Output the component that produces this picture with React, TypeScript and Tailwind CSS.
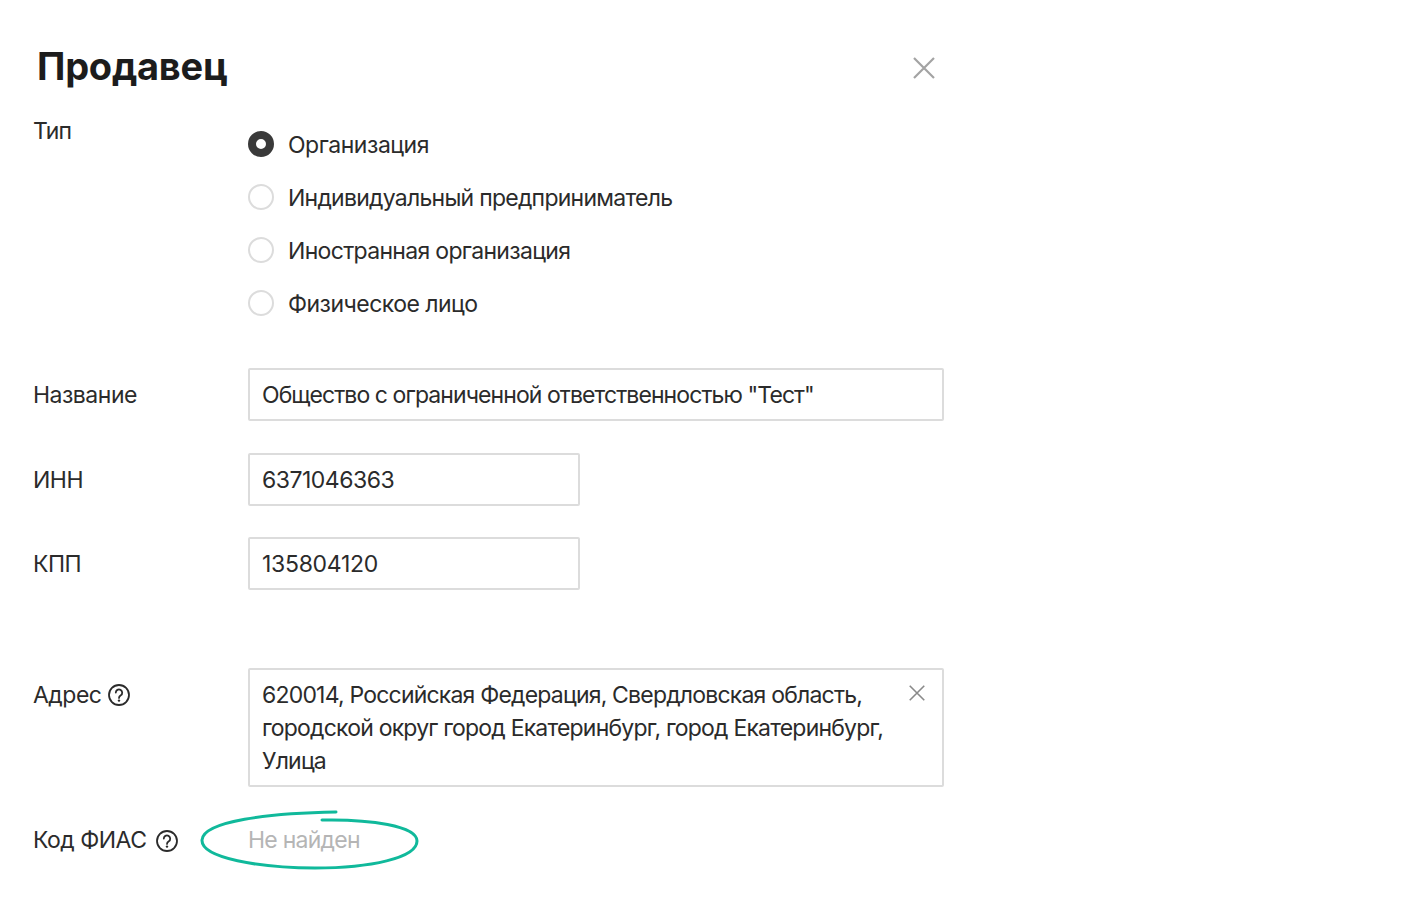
import React from 'react';

const OPTIONS = [
  { label: 'Организация', tracking: 'tracking-[-0.47px]' },
  { label: 'Индивидуальный предприниматель', tracking: 'tracking-[-0.75px]' },
  { label: 'Иностранная организация', tracking: 'tracking-[-0.68px]' },
  { label: 'Физическое лицо', tracking: 'tracking-[-0.53px]' },
];

const CloseIcon = ({ size, color }: { size: number; color: string }) => (
  <svg width={size} height={size} viewBox="0 0 22 22" fill="none" stroke={color} strokeWidth="2.2">
    <path d="M1 1L21 21M21 1L1 21" />
  </svg>
);

const HelpIcon = () => (
  <svg width="24" height="24" viewBox="0 0 24 24" fill="none" stroke="#2b2b2b" strokeWidth="1.8" className="shrink-0">
    <circle cx="12" cy="12" r="10" />
    <path d="M8.8 9.6a3.2 3.2 0 1 1 5 2.7c-1.1.7-1.8 1.3-1.8 2.6" strokeLinecap="round" />
    <circle cx="12" cy="17.6" r="1.2" fill="#2b2b2b" stroke="none" />
  </svg>
);

const Field = ({ label, value, width, tracking }: { label: string; value: string; width: string; tracking: string }) => (
  <div className="flex items-center">
    <div className="w-[215px] shrink-0 pt-[1px]">{label}</div>
    <div className={`${width} ${tracking} h-[53px] flex items-center pl-[12px] pt-[1px] border-2 border-[#dcdcdc] rounded-[2px]`}>{value}</div>
  </div>
);

export default function App() {
  return (
    <div className="w-[1418px] h-[903px] bg-white overflow-hidden pl-[33px] pt-[39px] text-[23px] leading-[33px] text-[#2b2b2b] font-['Inter','Noto_Sans',sans-serif] tracking-[-0.5px]">
      <div className="w-[911px] flex items-center justify-between pl-[4px] pr-[9px] h-[54px]">
        <h1 className="text-[38px] leading-[54px] font-bold text-[#1c1c1c] tracking-[-0.25px]">Продавец</h1>
        <div className="pt-[4px]">
          <CloseIcon size={22} color="#a3a3a3" />
        </div>
      </div>

      <div className="flex mt-[22px]">
        <div className="w-[215px] shrink-0 tracking-[-0.8px]">Тип</div>
        <div className="flex flex-col gap-[16px] pt-[10px]">
          {OPTIONS.map((option, i) => (
            <div key={option.label} className="flex items-center gap-[14px]">
              {i === 0 ? (
                <span className="w-[26px] h-[26px] rounded-full border-[8px] border-[#3a3a3a] bg-white" />
              ) : (
                <span className="w-[26px] h-[26px] rounded-full border-2 border-[#dcdcdc]" />
              )}
              <span className={`${option.tracking} pt-[4px]`}>{option.label}</span>
            </div>
          ))}
        </div>
      </div>

      <div className="flex flex-col gap-[31px] mt-[47px]">
        <Field label="Название" value={'Общество с ограниченной ответственностью "Тест"'} width="w-[696px]" tracking="tracking-[-0.92px]" />
        <div className="flex flex-col gap-[31px] mt-[1px]">
          <Field label="ИНН" value="6371046363" width="w-[332px]" tracking="tracking-[-0.5px]" />
          <Field label="КПП" value="135804120" width="w-[332px]" tracking="tracking-[-0.3px]" />
        </div>
      </div>

      <div className="flex mt-[78px]">
        <div className="w-[215px] shrink-0 flex items-center gap-[6px] h-[53px] pt-[1px]">
          Адрес <HelpIcon />
        </div>
        <div className="w-[696px] h-[119px] relative pl-[12px] pr-[50px] pt-[9px] border-2 border-[#dcdcdc] rounded-[2px] tracking-[-0.8px]">
          620014, Российская Федерация, Свердловская область, городской округ город Екатеринбург, город Екатеринбург, Улица
          <div className="absolute right-[17px] top-[15px]">
            <CloseIcon size={16} color="#8a8a8a" />
          </div>
        </div>
      </div>

      <div className="flex items-center mt-[37px]">
        <div className="w-[215px] shrink-0 flex items-center gap-[8px]">
          Код ФИАС <HelpIcon />
        </div>
        <div className="relative text-[#b5b5b5] tracking-[-0.75px]">
          Не найден
          <svg width="222" height="60" viewBox="0 0 222 60" fill="none" stroke="#10b99b" strokeWidth="3" className="absolute left-[-48px] top-[-14px]">
            <path d="M136 2C70 3 3 11 2 30C1 48 60 58 115 58C170 58 217 48 217 31C217 16 170 9 122 10" strokeLinecap="round" />
          </svg>
        </div>
      </div>
    </div>
  );
}
